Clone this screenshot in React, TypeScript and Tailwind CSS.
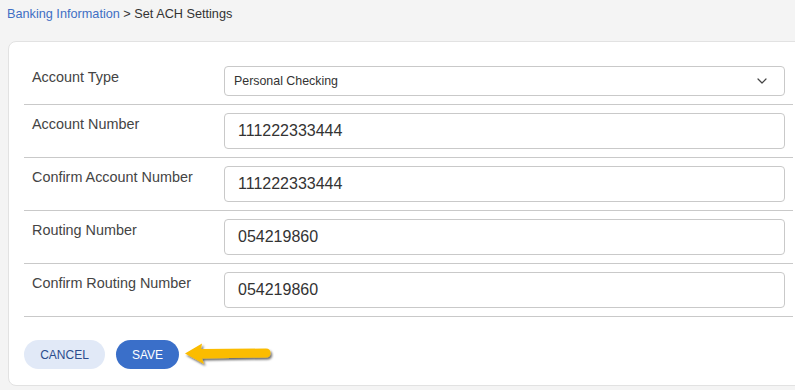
import { ChevronDown } from "lucide-react";

const rows = [
  { label: "Confirm Account Number", value: "111222333444" },
  { label: "Routing Number", value: "054219860" },
  { label: "Confirm Routing Number", value: "054219860" },
];

function Arrow() {
  return (
    <svg width="90" height="28" viewBox="0 0 90 28" className="ml-[5px]">
      <defs>
        <filter id="sh" x="-20%" y="-40%" width="140%" height="180%">
          <feDropShadow dx="1.5" dy="2" stdDeviation="1" floodColor="#000" floodOpacity="0.6" />
        </filter>
      </defs>
      <path
        d="M1 12.5 L18 2.5 L17 8 L82 7.5 Q86.5 7.6 86.5 12 Q86.5 16.4 82 16.5 L18 17.5 L20 23 Z"
        fill="#fbbc05"
        filter="url(#sh)"
      />
    </svg>
  );
}

export default function App() {
  return (
    <div
      className="w-[795px] h-[390px] overflow-hidden bg-[#f4f4f4]"
      style={{ fontFamily: "'Liberation Sans', Arial, sans-serif" }}
    >
      <div className="pl-[7px] pt-[6px] text-[12.7px] leading-[16px] text-[#333]">
        <span className="text-[#3f6fc4]">Banking Information</span> &gt; Set ACH Settings
      </div>

      <div className="ml-[8px] mt-[19px] w-[820px] h-[345px] bg-white border border-[#e2e2e2] rounded-[8px] pl-[15px] pt-[15px]">
        <div className="w-[769px]">
          {/* Account type */}
          <div className="flex h-[48px] border-b border-[#c9c9c9]">
            <div className="w-[200px] pl-[8px] pt-[12px] text-[14.4px] leading-[16px] text-[#444]">
              Account Type
            </div>
            <div className="mt-[9px] h-[30px] w-[561px] border border-[#c9c9c9] rounded-[4px] flex items-center justify-between pl-[9px] pr-[14px]">
              <span className="text-[12.4px] text-[#333]">Personal Checking</span>
              <ChevronDown className="w-[16px] h-[16px] text-[#444]" strokeWidth={1.8} />
            </div>
          </div>

          {/* Account number */}
          <div className="flex h-[53px] border-b border-[#c9c9c9]">
            <div className="w-[200px] pl-[8px] pt-[11px] text-[14.4px] leading-[16px] text-[#444]">
              Account Number
            </div>
            <div className="mt-[8px] h-[36px] w-[561px] border border-[#c9c9c9] rounded-[4px] flex items-center pl-[13px]">
              <span className="text-[16px] text-[#333]">111222333444</span>
            </div>
          </div>

          {rows.map((r) => (
            <div key={r.label} className="flex h-[53px] border-b border-[#c9c9c9]">
              <div className="w-[200px] pl-[8px] pt-[11px] text-[14.4px] leading-[16px] text-[#444]">
                {r.label}
              </div>
              <div className="mt-[8px] h-[36px] w-[561px] border border-[#c9c9c9] rounded-[4px] flex items-center pl-[13px]">
                <span className="text-[16px] text-[#333]">{r.value}</span>
              </div>
            </div>
          ))}

          <div className="flex items-center pt-[23px]">
            <button className="w-[81px] h-[29px] rounded-full bg-[#e1e9f7] text-[#2b4c8c] text-[12px]">
              CANCEL
            </button>
            <button className="ml-[11px] w-[63px] h-[29px] rounded-full bg-[#3a6fc9] text-white text-[12px]">
              SAVE
            </button>
            <Arrow />
          </div>
        </div>
      </div>
    </div>
  );
}
